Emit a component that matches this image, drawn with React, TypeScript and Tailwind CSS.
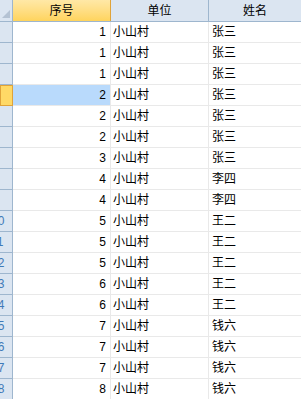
const rows = [
  { no: 1, unit: "小山村", name: "张三" },
  { no: 1, unit: "小山村", name: "张三" },
  { no: 1, unit: "小山村", name: "张三" },
  { no: 2, unit: "小山村", name: "张三" },
  { no: 2, unit: "小山村", name: "张三" },
  { no: 2, unit: "小山村", name: "张三" },
  { no: 3, unit: "小山村", name: "张三" },
  { no: 4, unit: "小山村", name: "李四" },
  { no: 4, unit: "小山村", name: "李四" },
  { no: 5, unit: "小山村", name: "王二" },
  { no: 5, unit: "小山村", name: "王二" },
  { no: 5, unit: "小山村", name: "王二" },
  { no: 6, unit: "小山村", name: "王二" },
  { no: 6, unit: "小山村", name: "王二" },
  { no: 7, unit: "小山村", name: "钱六" },
  { no: 7, unit: "小山村", name: "钱六" },
  { no: 7, unit: "小山村", name: "钱六" },
  { no: 8, unit: "小山村", name: "钱六" },
];

const SELECTED = 3;

export default function App() {
  return (
    <div
      className="h-[399px] w-[301px] overflow-hidden bg-white text-[12px] leading-none text-black"
      style={{ fontFamily: '"Liberation Sans", "Noto Sans CJK SC", sans-serif' }}
    >
      {/* Header row */}
      <div className="grid h-[22px] grid-cols-[13px_98px_98px_1fr] border-b border-[#9eb6ce] bg-[#dbe5f1]">
        <div className="flex items-end justify-end border-r border-[#9eb6ce] pb-[3px] pr-[2px]">
          <svg width="8" height="8" viewBox="0 0 8 8">
            <polygon points="8,0 8,8 0,8" fill="#b4c2d3" />
          </svg>
        </div>
        <div className="flex items-center justify-center border-r border-[#e0a339] bg-gradient-to-b from-[#ffe8a6] to-[#ffd45c]">
          序号
        </div>
        <div className="flex items-center justify-center border-r border-[#9eb6ce]">单位</div>
        <div className="flex items-center justify-center">姓名</div>
      </div>

      {/* Body rows */}
      {rows.map((row, i) => {
        const selected = i === SELECTED;
        const n = i + 1;
        return (
          <div key={i} className="grid h-[21px] grid-cols-[13px_98px_98px_1fr]">
            <div
              className={
                selected
                  ? "flex items-center overflow-hidden border border-[#e0a339] bg-[#ffd966]"
                  : "flex items-center overflow-hidden border-b border-r border-[#9eb6ce] bg-[#dbe5f1] text-[#3f7ab8]"
              }
            >
              {n >= 10 && <span className="-ml-[9px] whitespace-nowrap">{n}</span>}
            </div>
            <div
              className={
                selected
                  ? "flex items-center justify-end border-b border-r border-[#e9e9e9] bg-[#b9dafc] pr-[4px]"
                  : "flex items-center justify-end border-b border-r border-[#e9e9e9] pr-[4px]"
              }
            >
              {row.no}
            </div>
            <div className="flex items-center border-b border-r border-[#e9e9e9] pl-[2px]">{row.unit}</div>
            <div className="flex items-center border-b border-[#e9e9e9] pl-[3px]">{row.name}</div>
          </div>
        );
      })}
    </div>
  );
}
